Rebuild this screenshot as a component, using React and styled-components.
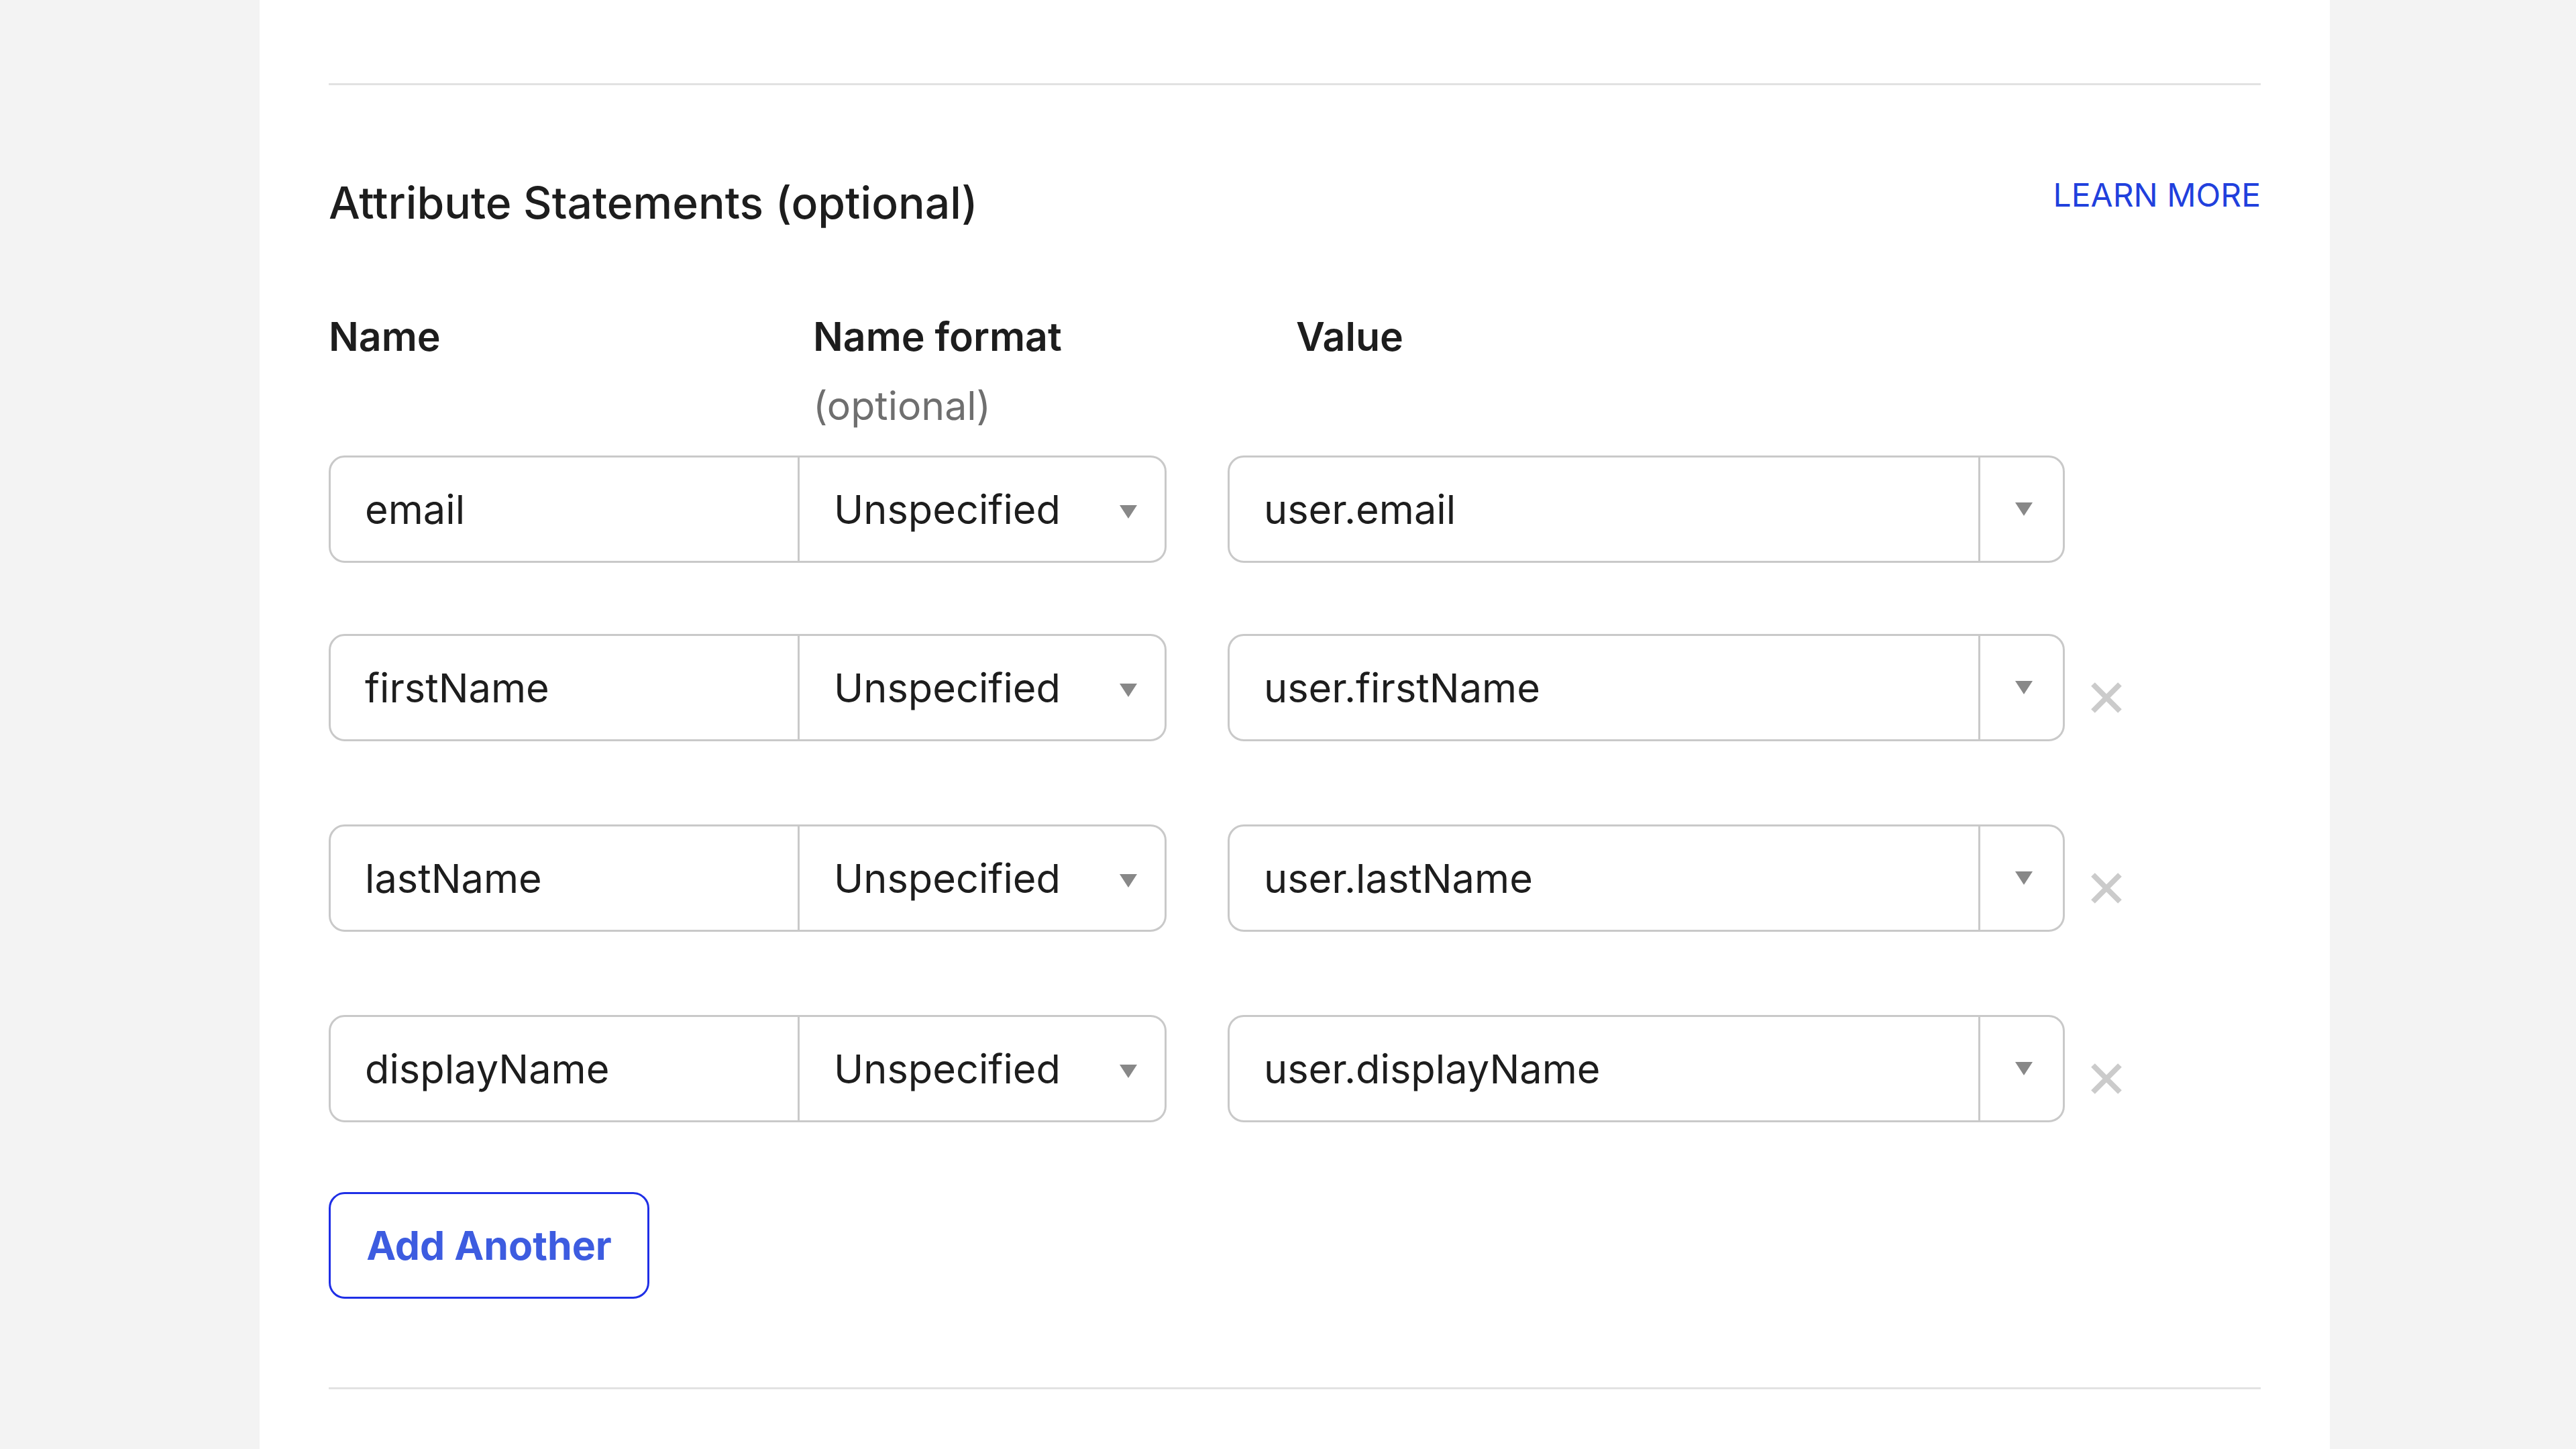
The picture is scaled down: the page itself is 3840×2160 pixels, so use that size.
import styled, { createGlobalStyle } from "styled-components";

const GlobalStyle = createGlobalStyle`
  html, body {
    margin: 0;
    padding: 0;
    background: #f3f3f3;
    font-family: Inter, "Noto Sans", sans-serif;
    color: #1d1d1d;
  }
`;

const Page = styled.div`
  display: flex;
  min-height: 100vh;
`;

const Panel = styled.section`
  margin-left: 387px;
  width: 3086px;
  min-height: 2160px;
  background: #fff;
  padding: 124px 103px 0;
  box-sizing: border-box;
`;

const Divider = styled.hr`
  margin: 0;
  border: none;
  height: 3px;
  background: #e2e2e2;
`;

const TitleBar = styled.div`
  display: flex;
  justify-content: space-between;
  align-items: flex-start;
  margin-top: 135px;
`;

const Title = styled.h2`
  margin: 0;
  font-size: 66px;
  line-height: 80px;
  font-weight: 500;
`;

const LearnMore = styled.a`
  font-size: 48px;
  line-height: 58px;
  color: #2140dd;
  text-decoration: none;
`;

const HeaderGrid = styled.div`
  display: grid;
  grid-template-columns: 722px 720px 1fr;
  align-items: start;
  margin-top: 125px;
`;

const HeaderLabel = styled.div`
  font-size: 59px;
  line-height: 70px;
  font-weight: 600;
`;

const HeaderHint = styled.div`
  font-size: 59px;
  line-height: 70px;
  color: #6f6f6f;
  margin-top: 33px;
`;

const Rows = styled.div`
  display: flex;
  flex-direction: column;
  gap: 106px;
  margin-top: 39px;
`;

const Row = styled.div`
  display: flex;
  align-items: flex-start;
`;

const FieldGroup = styled.div`
  display: flex;
  height: 160px;
  width: ${(p) => p.$width}px;
  margin-right: ${(p) => p.$gap || 0}px;
  border: 3px solid #c9c9c9;
  border-radius: 24px;
  box-sizing: border-box;
  overflow: hidden;
`;

const Field = styled.div`
  display: flex;
  align-items: center;
  justify-content: space-between;
  flex: ${(p) => (p.$width ? `0 0 ${p.$width}px` : "1 1 auto")};
  padding: 0 ${(p) => p.$padRight || 52}px 0 51px;
  font-size: 59.5px;
  box-sizing: border-box;
  border-right: ${(p) => (p.$divided ? "3px solid #c9c9c9" : "none")};
`;

const Toggle = styled.div`
  flex: 0 0 123px;
  display: flex;
  align-items: center;
  justify-content: center;
  padding-left: 6px;
  box-sizing: border-box;
`;

const Caret = styled.svg`
  width: 26px;
  height: 20px;
  fill: #888;
  margin-top: ${(p) => p.$drop || 0}px;
`;

const RemoveButton = styled.button`
  all: unset;
  width: 48px;
  height: 48px;
  margin: 71px 0 59px 38px;
  cursor: pointer;
`;

const AddButton = styled.button`
  all: unset;
  box-sizing: border-box;
  display: flex;
  align-items: center;
  justify-content: center;
  width: 478px;
  height: 159px;
  margin-top: 86px;
  border: 3px solid #1f2fe6;
  border-radius: 24px;
  color: #3d5ce0;
  font-family: Inter, "Noto Sans", sans-serif;
  font-size: 59px;
  font-weight: 700;
  cursor: pointer;
`;

const BottomDivider = styled(Divider)`
  margin-top: 132px;
`;

const rows = [
  { name: "email", value: "user.email", removable: false },
  { name: "firstName", value: "user.firstName", removable: true },
  { name: "lastName", value: "user.lastName", removable: true },
  { name: "displayName", value: "user.displayName", removable: true },
];

const CaretIcon = ({ drop }) => (
  <Caret viewBox="0 0 26 20" $drop={drop}>
    <polygon points="0,0 26,0 13,20" />
  </Caret>
);

const CloseIcon = () => (
  <svg width="48" height="48" viewBox="0 0 48 48">
    <path d="M4 4 L44 44 M44 4 L4 44" stroke="#cbcbcb" strokeWidth="8" />
  </svg>
);

export default function App() {
  return (
    <>
      <GlobalStyle />
      <Page>
        <Panel>
          <Divider />
          <TitleBar>
            <Title>Attribute Statements (optional)</Title>
            <LearnMore href="#">LEARN MORE</LearnMore>
          </TitleBar>

          <HeaderGrid>
            <HeaderLabel>Name</HeaderLabel>
            <div>
              <HeaderLabel>Name format</HeaderLabel>
              <HeaderHint>(optional)</HeaderHint>
            </div>
            <HeaderLabel>Value</HeaderLabel>
          </HeaderGrid>

          <Rows>
            {rows.map((r) => (
              <Row key={r.name}>
                <FieldGroup $width={1249} $gap={91}>
                  <Field $width={699} $divided>
                    {r.name}
                  </Field>
                  <Field $padRight={41}>
                    Unspecified
                    <CaretIcon drop={8} />
                  </Field>
                </FieldGroup>
                <FieldGroup $width={1248}>
                  <Field $divided>{r.value}</Field>
                  <Toggle>
                    <CaretIcon />
                  </Toggle>
                </FieldGroup>
                {r.removable && (
                  <RemoveButton aria-label="Remove">
                    <CloseIcon />
                  </RemoveButton>
                )}
              </Row>
            ))}
          </Rows>

          <AddButton>Add Another</AddButton>
          <BottomDivider />
        </Panel>
      </Page>
    </>
  );
}
